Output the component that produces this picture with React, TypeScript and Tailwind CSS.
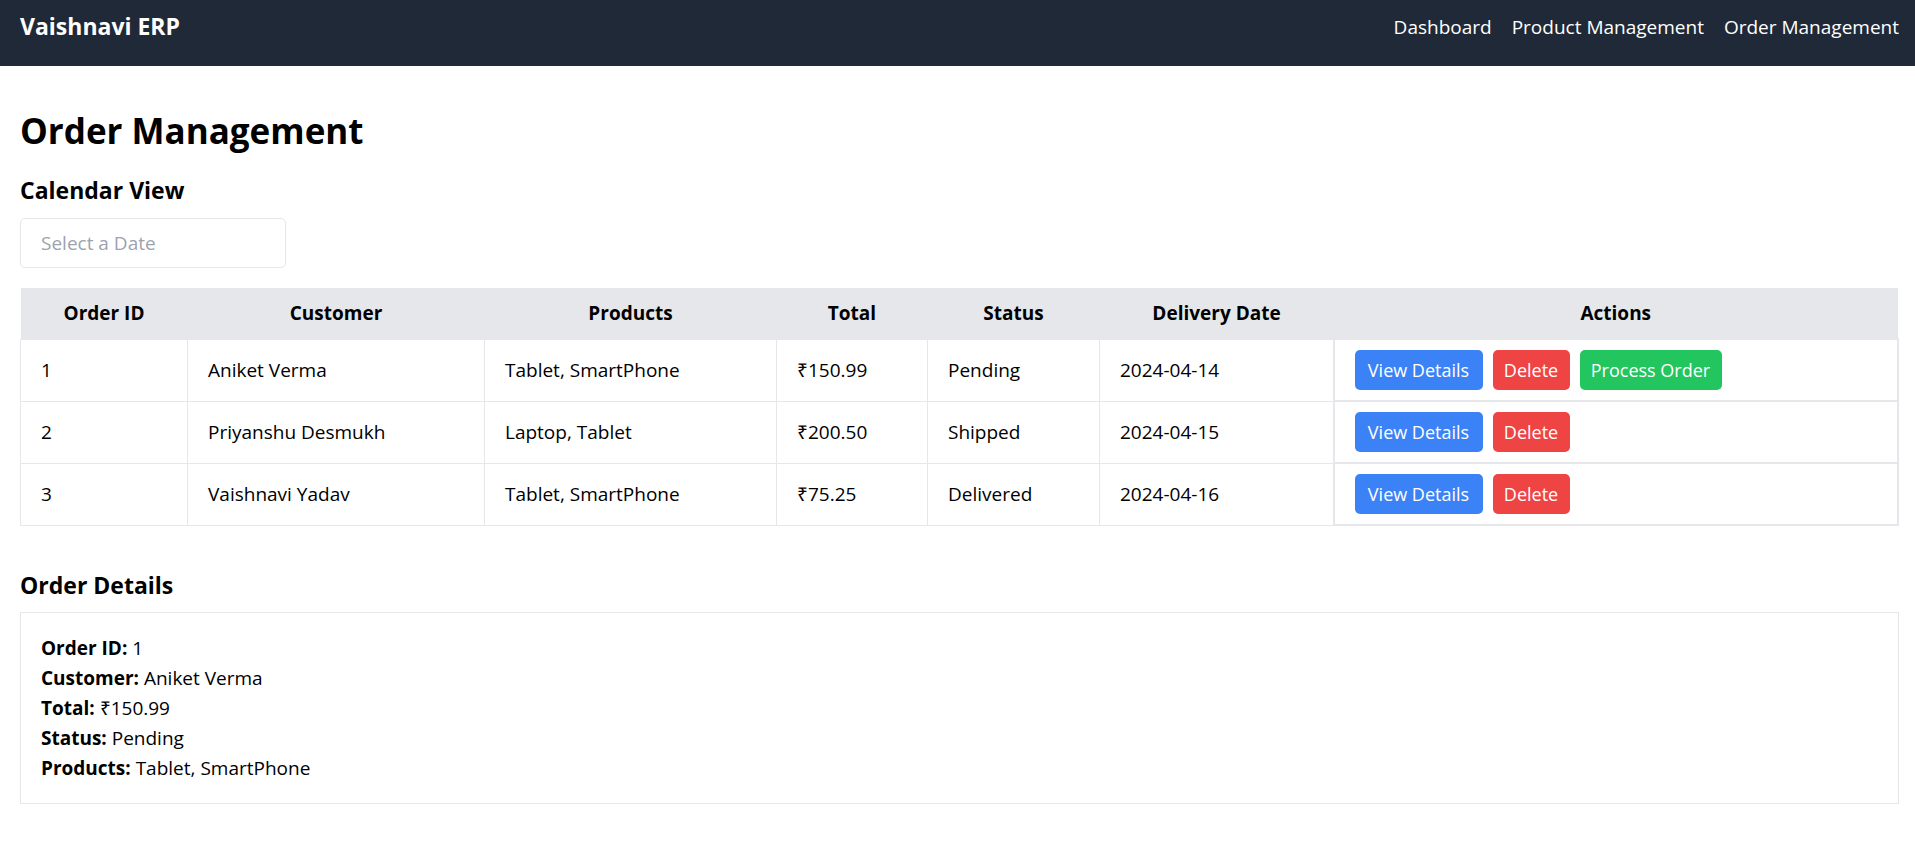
import React from 'react';

interface Order {
  id: number;
  customer: string;
  products: string;
  total: string;
  status: string;
  date: string;
}

const orders: Order[] = [
  { id: 1, customer: 'Aniket Verma', products: 'Tablet, SmartPhone', total: '₹150.99', status: 'Pending', date: '2024-04-14' },
  { id: 2, customer: 'Priyanshu Desmukh', products: 'Laptop, Tablet', total: '₹200.50', status: 'Shipped', date: '2024-04-15' },
  { id: 3, customer: 'Vaishnavi Yadav', products: 'Tablet, SmartPhone', total: '₹75.25', status: 'Delivered', date: '2024-04-16' },
];

export default function App() {
  const selected = orders[0];

  return (
    <div className="min-h-screen bg-white text-black font-['Open_Sans',sans-serif]">
      {/* Navbar */}
      <nav className="h-[66px] bg-[#1f2937] pl-5 pr-4 pt-[9px] text-white">
        <div className="flex h-[35px] items-center justify-between">
          <span className="text-[23px] font-bold leading-[35px]">Vaishnavi ERP</span>
          <div className="flex gap-5 text-[19px] leading-[30px]">
            <a href="#">Dashboard</a>
            <a href="#">Product Management</a>
            <a href="#">Order Management</a>
          </div>
        </div>
      </nav>

      <main className="pl-5 pr-4 pt-[42px] pb-10">
        <h1 className="mb-5 text-[35px] font-bold leading-[45px]">Order Management</h1>

        <h2 className="mb-[10px] text-[23px] font-bold leading-[35px]">Calendar View</h2>
        <input
          type="text"
          placeholder="Select a Date"
          className="mb-5 block h-[50px] w-[266px] rounded-[5px] border border-[#e5e7eb] px-5 text-[19px] outline-none placeholder:text-[#9ca3af]"
        />

        {/* Orders table */}
        <table className="w-full table-fixed border-collapse text-[19px] leading-[30px]">
          <thead>
            <tr className="bg-[#e5e7eb]">
              <th className="w-[167px] px-5 py-[10px] text-center font-bold">Order ID</th>
              <th className="w-[297px] px-5 py-[10px] text-center font-bold">Customer</th>
              <th className="w-[292px] px-5 py-[10px] text-center font-bold">Products</th>
              <th className="w-[151px] px-5 py-[10px] text-center font-bold">Total</th>
              <th className="w-[172px] px-5 py-[10px] text-center font-bold">Status</th>
              <th className="w-[234px] px-5 py-[10px] text-center font-bold">Delivery Date</th>
              <th className="px-5 py-[10px] text-center font-bold">Actions</th>
            </tr>
          </thead>
          <tbody>
            {orders.map((o) => (
              <tr key={o.id}>
                <td className="border border-[#e5e7eb] px-5 py-[10px]">{o.id}</td>
                <td className="border border-[#e5e7eb] px-5 py-[10px]">{o.customer}</td>
                <td className="border border-[#e5e7eb] px-5 py-[10px]">{o.products}</td>
                <td className="border border-[#e5e7eb] px-5 py-[10px]">{o.total}</td>
                <td className="border border-[#e5e7eb] px-5 py-[10px]">{o.status}</td>
                <td className="border border-[#e5e7eb] px-5 py-[10px]">{o.date}</td>
                <td className="border-2 border-[#e5e7eb] px-5 py-[10px]">
                  <div className="flex gap-[10px] text-[18px] text-white">
                    <button className="h-10 w-[128px] rounded-[5px] bg-[#3b82f6]">View Details</button>
                    <button className="h-10 w-[77px] rounded-[5px] bg-[#ef4444]">Delete</button>
                    {o.status === 'Pending' && (
                      <button className="h-10 w-[142px] rounded-[5px] bg-[#22c55e]">Process Order</button>
                    )}
                  </div>
                </td>
              </tr>
            ))}
          </tbody>
        </table>

        {/* Details */}
        <h2 className="mt-[42px] mb-[9px] text-[23px] font-bold leading-[35px]">Order Details</h2>
        <div className="border border-[#e5e7eb] p-5 text-[19px] leading-[30px]">
          <p><span className="font-bold">Order ID:</span> {selected.id}</p>
          <p><span className="font-bold">Customer:</span> {selected.customer}</p>
          <p><span className="font-bold">Total:</span> {selected.total}</p>
          <p><span className="font-bold">Status:</span> {selected.status}</p>
          <p><span className="font-bold">Products:</span> {selected.products}</p>
        </div>
      </main>
    </div>
  );
}
